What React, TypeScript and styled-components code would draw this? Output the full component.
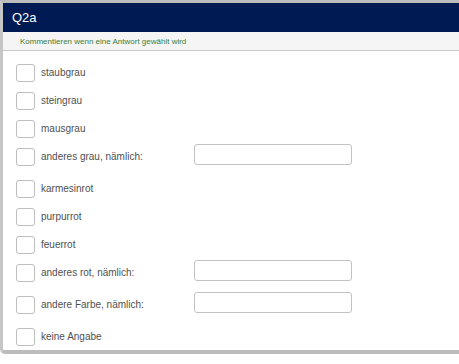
import React from "react";
import styled, { createGlobalStyle } from "styled-components";

const GlobalStyle = createGlobalStyle`
  html, body {
    margin: 0;
    padding: 0;
    background: #ffffff;
    overflow: hidden;
  }
  body {
    font-family: "Liberation Sans", Arial, sans-serif;
  }
`;

const Card = styled.div`
  border-top: 3px solid #bdbdbd;
  border-left: 3px solid #c6c6c6;
  border-bottom: 4px solid #bcbcbc;
  border-bottom-left-radius: 5px;
  background: #ffffff;
`;

const Header = styled.header`
  height: 29px;
  display: flex;
  align-items: center;
  padding-left: 9px;
  background: #001b54;
  color: #ffffff;
  font-size: 13px;
`;

const SubHeader = styled.div`
  height: 18px;
  display: flex;
  align-items: center;
  padding-left: 17px;
  background: #f5f5f5;
  border-bottom: 1px solid #c9c9c9;
  color: #3a7d3a;
  font-size: 8px;
`;

const List = styled.div`
  display: flex;
  flex-direction: column;
  padding: 8px 0 0 13px;
`;

const Row = styled.div<{ $withInput?: boolean }>`
  display: flex;
  align-items: flex-start;
  padding: 5px 0;
  height: ${(p) => (p.$withInput ? 22 : 18)}px;
  &:last-child {
    padding-bottom: 4px;
  }
`;

const Box = styled.span`
  flex: 0 0 auto;
  box-sizing: border-box;
  width: 19px;
  height: 18px;
  border: 1px solid #bdbdbd;
  border-radius: 3px;
  background: #ffffff;
`;

const Label = styled.span<{ $withInput?: boolean }>`
  flex: 0 0 ${(p) => (p.$withInput ? "153px" : "auto")};
  margin-left: 6px;
  height: 18px;
  line-height: 17px;
  font-size: 10px;
  color: #505050;
`;

const TextInput = styled.input`
  box-sizing: border-box;
  width: 158px;
  height: 21px;
  margin: -4px 0 0 0;
  border: 1px solid #c2c2c2;
  border-radius: 3px;
  background: #ffffff;
  outline: none;
`;

const options = [
  { label: "staubgrau" },
  { label: "steingrau" },
  { label: "mausgrau" },
  { label: "anderes grau, nämlich:", other: true },
  { label: "karmesinrot" },
  { label: "purpurrot" },
  { label: "feuerrot" },
  { label: "anderes rot, nämlich:", other: true },
  { label: "andere Farbe, nämlich:", other: true },
  { label: "keine Angabe" },
];

function App() {
  return (
    <>
      <GlobalStyle />
      <Card>
        <Header>Q2a</Header>
        <SubHeader>Kommentieren wenn eine Antwort gewählt wird</SubHeader>
        <List>
          {options.map((o) => (
            <Row key={o.label} $withInput={o.other}>
              <Box />
              <Label $withInput={o.other}>{o.label}</Label>
              {o.other && <TextInput type="text" />}
            </Row>
          ))}
        </List>
      </Card>
    </>
  );
}

export default App;
